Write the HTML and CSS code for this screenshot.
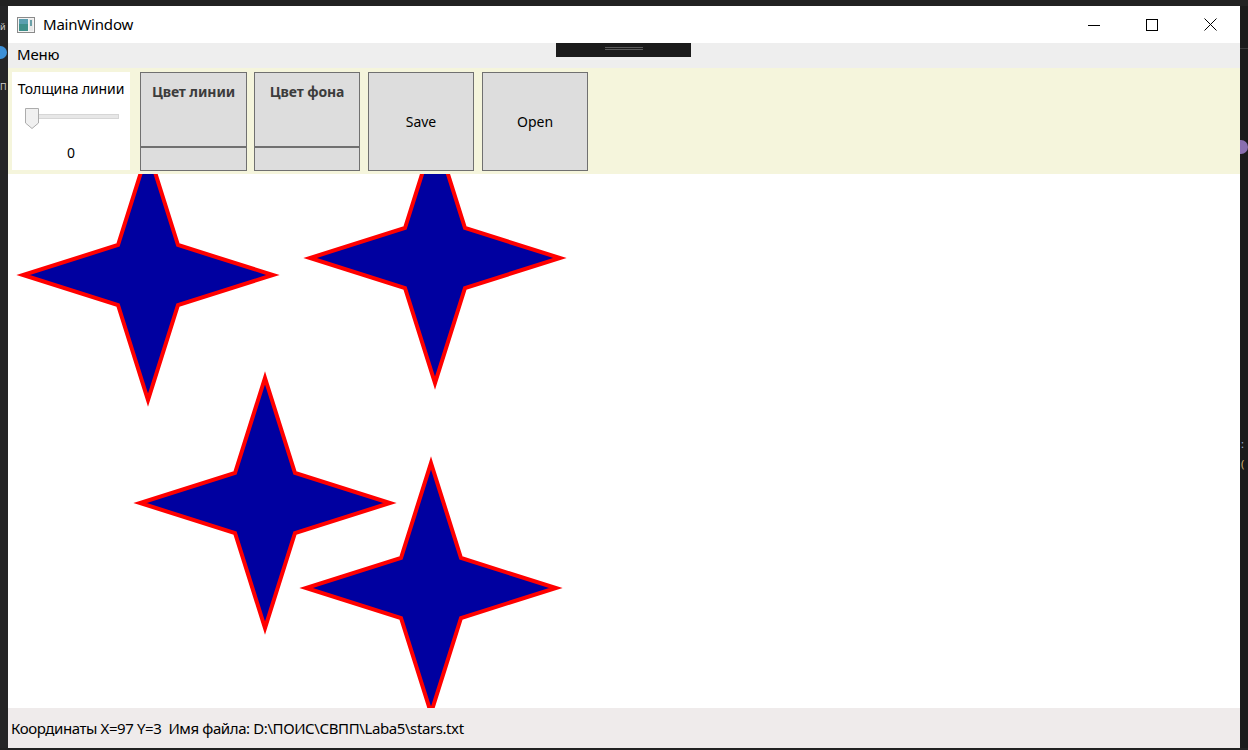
FILE: index.html
```html
<!DOCTYPE html>
<html lang="ru">
<head>
<meta charset="utf-8">
<title>MainWindow</title>
<link rel="stylesheet" href="styles.css">
</head>
<body>
<div class="screen">
  <div class="side side-left">
    <span class="side-glyph g1">й</span>
    <span class="side-dot"></span>
    <span class="side-glyph g2">П</span>
  </div>
  <div class="window">
    <div class="titlebar">
      <svg class="app-icon" width="18" height="16" viewBox="0 0 18 16">
        <rect x="0.5" y="0.5" width="17" height="15" fill="#f4f4f4" stroke="#8a8a8a"/>
        <rect x="2" y="2" width="9" height="12" fill="#3f8f8a"/>
        <rect x="2" y="2" width="9" height="5" fill="#5b9fb0"/>
        <rect x="12" y="2" width="4" height="12" fill="#e8e8e8"/>
        <rect x="13" y="3" width="2" height="6" fill="#6aa0a8"/>
      </svg>
      <span class="title">MainWindow</span>
      <div class="controls">
        <div class="ctl">
          <svg width="12" height="12" viewBox="0 0 12 12"><path d="M0 6.5H12" stroke="#000" stroke-width="1"/></svg>
        </div>
        <div class="ctl">
          <svg width="12" height="12" viewBox="0 0 12 12"><rect x="0.5" y="0.5" width="11" height="11" fill="none" stroke="#000" stroke-width="1"/></svg>
        </div>
        <div class="ctl">
          <svg width="13" height="13" viewBox="0 0 13 13"><path d="M0.5 0.5L12.5 12.5M12.5 0.5L0.5 12.5" stroke="#000" stroke-width="1"/></svg>
        </div>
      </div>
    </div>
    <div class="menubar">
      <span class="menu-item">Меню</span>
      <div class="dev-tab"><span class="dev-line"></span><span class="dev-line"></span></div>
    </div>
    <div class="toolbar">
      <div class="panel">
        <span class="panel-label">Толщина линии</span>
        <div class="slider">
          <div class="track"></div>
          <svg class="thumb" width="14" height="21" viewBox="0 0 14 21">
            <path d="M0.5 0.5H13.5V15L7 20.5L0.5 15Z" fill="#f0f0f0" stroke="#acacac"/>
          </svg>
        </div>
        <span class="panel-value">0</span>
      </div>
      <div class="btn btn-color w1">
        <span class="btn-label">Цвет линии</span>
        <div class="swatch"></div>
      </div>
      <div class="btn btn-color w2">
        <span class="btn-label">Цвет фона</span>
        <div class="swatch"></div>
      </div>
      <div class="btn btn-plain w3">Save</div>
      <div class="btn btn-plain w4">Open</div>
    </div>
    <div class="canvas">
      <svg class="stars" width="1232" height="534" viewBox="0 0 1232 534">
        <polygon class="star" points="140,-24 170,71 265,101 170,131 140,226 110,131 15,101 110,71"/>
        <polygon class="star" points="427,-41 457,54 552,84 457,114 427,209 397,114 302,84 397,54"/>
        <polygon class="star" points="257,204 287,299 382,329 287,359 257,454 227,359 132,329 227,299"/>
        <polygon class="star" points="423,289 453,384 548,414 453,444 423,539 393,444 298,414 393,384"/>
      </svg>
    </div>
    <div class="statusbar">Координаты X=97 Y=3  Имя файла: D:\ПОИС\СВПП\Laba5\stars.txt</div>
  </div>
  <div class="side side-right">
    <span class="r-line r1"></span>
    <span class="r-icon"></span>
    <span class="r-glyph r2">:</span>
    <span class="r-glyph r3">(</span>
  </div>
</div>
</body>
</html>
```
FILE: styles.css
```css
* { box-sizing: border-box; }

html, body {
  margin: 0;
  padding: 0;
  background: #1e1e1e;
}

body {
  width: 1248px;
  height: 750px;
  overflow: hidden;
  font-family: "Noto Sans", "Open Sans", sans-serif;
}

.screen {
  display: flex;
  width: 1248px;
  height: 750px;
  padding-top: 6px;
  padding-bottom: 2px;
  background: #222222;
}

.side {
  width: 8px;
  flex: none;
  position: relative;
  overflow: hidden;
  background: #252526;
}

.side-glyph {
  position: absolute;
  left: 0;
  font-size: 9px;
  color: #cccccc;
  line-height: 1;
}
.g1 { top: 16px; }
.g2 { top: 76px; }

.side-dot {
  position: absolute;
  left: -6px;
  top: 40px;
  width: 13px;
  height: 13px;
  border-radius: 50%;
  background: #3c8fd6;
}

.side-right { background: #1b1b1b; }

.r-line {
  position: absolute;
  left: 0;
  width: 8px;
  height: 1px;
  background: #3a3a3a;
}
.r1 { top: 42px; }

.r-icon {
  position: absolute;
  left: 0;
  top: 134px;
  width: 8px;
  height: 14px;
  border-radius: 0 7px 7px 0;
  background: #8a6fb0;
}

.r-glyph {
  position: absolute;
  left: 1px;
  font-size: 11px;
  color: #9cb4d8;
  line-height: 1;
}
.r2 { top: 432px; }
.r3 { top: 452px; color: #d0b070; }

.window {
  flex: 1;
  display: flex;
  flex-direction: column;
  background: #ffffff;
  overflow: hidden;
}

/* Title bar */
.titlebar {
  height: 37px;
  flex: none;
  display: flex;
  align-items: center;
  background: #ffffff;
  padding-left: 9px;
}

.app-icon {
  flex: none;
}

.title {
  margin-left: 8px;
  margin-bottom: 2px;
  font-size: 15px;
  color: #000000;
  letter-spacing: -0.2px;
}

.controls {
  margin-left: auto;
  display: flex;
  height: 100%;
}

.ctl {
  width: 58.5px;
  display: flex;
  align-items: center;
  justify-content: center;
}

/* Menu bar */
.menubar {
  height: 25px;
  flex: none;
  display: flex;
  align-items: center;
  background: #eeeeee;
  padding-left: 9px;
  padding-bottom: 3px;
  position: relative;
}

.menu-item {
  font-size: 15px;
  color: #000000;
  letter-spacing: -0.2px;
}

.dev-tab {
  position: absolute;
  left: 548px;
  top: 0;
  width: 135px;
  height: 14px;
  background: #1b1b1b;
  display: flex;
  flex-direction: column;
  align-items: center;
  padding-top: 4px;
  gap: 1px;
}

.dev-line {
  width: 38px;
  height: 1px;
  background: #5a5a5a;
}

/* Toolbar */
.toolbar {
  height: 106px;
  flex: none;
  display: flex;
  align-items: flex-start;
  background: #f5f5dc;
  padding: 4px 0 0 4px;
}

.panel {
  width: 118px;
  height: 98px;
  background: #ffffff;
  display: flex;
  flex-direction: column;
  align-items: center;
  margin-right: 10px;
}

.panel-label {
  margin-top: 7px;
  font-size: 14px;
  color: #000000;
  letter-spacing: -0.1px;
  white-space: nowrap;
}

.slider {
  position: relative;
  width: 94px;
  height: 21px;
  margin-top: 10px;
  margin-left: 2px;
}

.track {
  position: absolute;
  left: 0;
  top: 6px;
  width: 94px;
  height: 5px;
  background: #e7e7e7;
  border: 1px solid #d6d6d6;
}

.thumb {
  position: absolute;
  left: 0;
  top: 0;
}

.panel-value {
  margin-top: 14px;
  font-size: 14px;
  color: #000000;
}

.btn {
  height: 99px;
  background: #dddddd;
  border: 1px solid #707070;
  flex: none;
}

.w1 { width: 107px; margin-right: 7px; }
.w2 { width: 106px; margin-right: 8px; }
.w3 { width: 106px; margin-right: 8px; }
.w4 { width: 106px; }

.btn-color {
  display: flex;
  flex-direction: column;
  align-items: center;
}

.btn-label {
  font-size: 14px;
  font-weight: bold;
  color: #3c3c3c;
  margin-top: 9px;
  letter-spacing: -0.1px;
  white-space: nowrap;
}

.swatch {
  margin-top: auto;
  width: 100%;
  height: 24px;
  border-top: 2px solid #707070;
}

.btn-plain {
  display: flex;
  align-items: center;
  justify-content: center;
  font-size: 14px;
  color: #000000;
}

/* Canvas */
.canvas {
  flex: 1;
  position: relative;
  overflow: hidden;
  background: #ffffff;
}

.stars {
  display: block;
}

.star {
  fill: #0000a0;
  stroke: #ff0000;
  stroke-width: 4;
  stroke-linejoin: miter;
  stroke-miterlimit: 10;
}

/* Status bar */
.statusbar {
  height: 40px;
  flex: none;
  display: flex;
  align-items: center;
  padding-left: 3px;
  background: #efebeb;
  font-size: 15px;
  color: #000000;
  white-space: pre;
  letter-spacing: -0.4px;
}
```
